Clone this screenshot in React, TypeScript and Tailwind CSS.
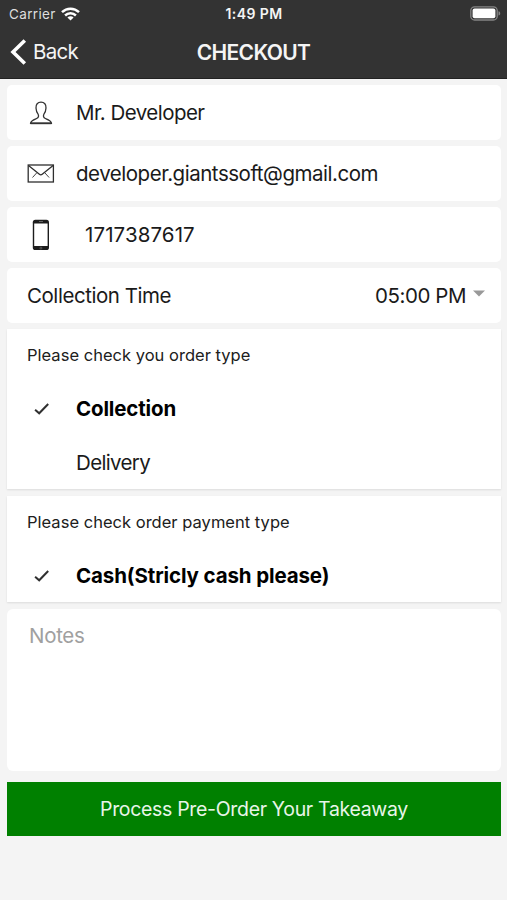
import React from 'react'

interface ContactField {
  id: string
  value: string
  icon: React.ReactNode
  valueClass: string
}

interface ChoiceGroupProps {
  title: string
  options: { label: string; className: string }[]
  className: string
}

const WifiIcon = () => (
  <svg width="19" height="14" viewBox="0 0 19 14" fill="none" stroke="white" strokeWidth="2.5">
    <path d="M1 5.2C5.8 0.6 13.2 0.6 18 5.2" />
    <path d="M4.1 8.5C7.1 5.6 11.9 5.6 14.9 8.5" />
    <path d="M9.5 13.6L6.4 10.5C8.1 8.9 10.9 8.9 12.6 10.5Z" fill="white" stroke="none" />
  </svg>
)

const BatteryIcon = () => (
  <svg width="31" height="15" viewBox="0 0 31 15" fill="none">
    <rect x="0.8" y="0.8" width="26.4" height="13.2" rx="3.8" stroke="#858585" strokeWidth="1.3" />
    <rect x="2.6" y="2.6" width="22.8" height="9.6" rx="2" fill="white" />
    <path d="M28.5 5.2C30.8 5.8 30.8 9 28.5 9.6Z" fill="#858585" />
  </svg>
)

const UserIcon = () => (
  <svg width="24" height="24" viewBox="0 0 24 24" fill="none" stroke="#333333" strokeWidth="1.3" strokeLinejoin="round">
    <path d="M12 1.2C8.6 1.2 6.8 3.5 7 7C7.1 9.5 8 12 9.2 13.4C9.9 15.1 9.6 16.7 7.6 17.5C4.4 18.7 2.1 19.3 1.5 22.4H22.5C21.9 19.3 19.6 18.7 16.4 17.5C14.4 16.7 14.1 15.1 14.8 13.4C16 12 16.9 9.5 17 7C17.2 3.5 15.4 1.2 12 1.2Z" />
    <path d="M1.5 22.3H22.5" strokeWidth="1.8" />
  </svg>
)

const MailIcon = () => (
  <svg width="28" height="19" viewBox="0 0 28 19" fill="none" stroke="#2f2f2f" strokeWidth="1.3">
    <rect x="1.2" y="1" width="25.2" height="17" />
    <path d="M1.5 1.5L12.4 10.3C13.4 11.1 14.2 11.1 15.2 10.3L26.1 1.5" />
    <path d="M5.5 13.5L9.6 9M22.1 13.5L18 9" strokeWidth="0.9" />
  </svg>
)

const PhoneIcon = () => (
  <svg width="18" height="32" viewBox="0 0 18 32">
    <rect x="0.8" y="0.7" width="16.2" height="30.4" rx="2.6" fill="#1c1c1c" />
    <rect x="2.2" y="4.5" width="13.4" height="22.5" fill="white" />
    <path d="M7 2.5H11" stroke="#777777" strokeWidth="0.8" />
    <circle cx="8.9" cy="29.1" r="1" fill="none" stroke="#777777" strokeWidth="0.6" />
  </svg>
)

const CheckIcon = () => (
  <svg width="16" height="14" viewBox="0 0 16 14" fill="none" stroke="#303030" strokeWidth="2" className="mt-[2px]">
    <path d="M1.1 7.7L5.2 11.3L14.2 2" />
  </svg>
)

const contactFields: ContactField[] = [
  { id: 'name', value: 'Mr. Developer', icon: <UserIcon />, valueClass: 'tracking-[-0.54px]' },
  { id: 'email', value: 'developer.giantssoft@gmail.com', icon: <MailIcon />, valueClass: 'tracking-[-0.47px]' },
  { id: 'phone', value: '1717387617', icon: <PhoneIcon />, valueClass: 'pl-[9px] tracking-[0.1px]' },
]

const ChoiceGroup: React.FC<ChoiceGroupProps> = ({ title, options, className }) => {
  const [selected, setSelected] = React.useState(options[0].label)

  return (
    <section className={`bg-white shadow-[0_1px_2px_rgba(0,0,0,0.1)] ${className}`}>
      <h2 className="flex h-[52px] items-center pl-5 text-[16.5px] tracking-[0.02px] text-[#202020]">{title}</h2>
      {options.map(option => {
        const checked = selected === option.label
        return (
          <button
            key={option.label}
            onClick={() => setSelected(option.label)}
            className="flex h-[54px] w-full items-center text-left"
          >
            <span className="flex w-[69px] shrink-0 justify-center">{checked && <CheckIcon />}</span>
            <span className={`pt-[2px] ${option.className} ${checked ? 'font-bold text-black' : ''}`}>{option.label}</span>
          </button>
        )
      })}
    </section>
  )
}

export default function App() {
  return (
    <div className="h-[900px] w-[507px] overflow-hidden bg-[#f4f4f4] font-[Inter,sans-serif] text-[20.5px] text-[#1a1a1a]">
      <header className="h-[79px] border-b border-[#222222] bg-[#333333] text-[#f5f5f5]">
        <div className="grid h-[27px] grid-cols-[1fr_auto_1fr] items-center pr-[6px] pl-[7px] text-[14px]">
          <div className="flex items-center gap-[5px] pl-[2px]">
            <span className="pt-px text-[13.5px] tracking-[0.35px] text-[#dedede]">Carrier</span>
            <WifiIcon />
          </div>
          <span className="text-center font-semibold tracking-[0.4px]">1:49 PM</span>
          <div className="flex justify-end"><BatteryIcon /></div>
        </div>
        <div className="grid h-[50px] grid-cols-3 items-center px-[9px]">
          <button className="flex items-center gap-[6px] tracking-[-0.75px]">
            <svg width="18" height="28" viewBox="0 0 18 28" fill="none" stroke="white" strokeWidth="3.6">
              <path d="M15.8 2.5L4 14L15.8 25.5" />
            </svg>
            <span className="pt-px">Back</span>
          </button>
          <h1 className="pt-[2px] text-center text-[21px] font-semibold tracking-[-0.65px]">CHECKOUT</h1>
        </div>
      </header>

      <main className="flex flex-col pt-[6px] pr-[6px] pl-[7px]">
        <div className="flex flex-col gap-[6px]">
          {contactFields.map(field => (
            <div key={field.id} className="flex h-[55px] items-center rounded-[5px] bg-white">
              <span className="flex w-[69px] shrink-0 justify-center pr-px">{field.icon}</span>
              <span className={`pt-[2px] ${field.valueClass}`}>{field.value}</span>
            </div>
          ))}
          <div className="flex h-[55px] items-center justify-between rounded-[5px] bg-white pr-4 pl-5">
            <span className="pt-[2px] tracking-[-0.45px]">Collection Time</span>
            <button className="flex items-center gap-[7px] tracking-[-0.45px]">
              <span className="pt-[2px]">05:00 PM</span>
              <svg width="12" height="7" viewBox="0 0 12 7" className="mb-[4px]">
                <path d="M0 0.5H12L6 6.5Z" fill="#999999" />
              </svg>
            </button>
          </div>
        </div>

        <ChoiceGroup
          title="Please check you order type"
          options={[
            { label: 'Collection', className: 'tracking-[-0.15px]' },
            { label: 'Delivery', className: 'tracking-[-0.65px]' },
          ]}
          className="mt-[6px] h-[160px]"
        />
        <ChoiceGroup
          title="Please check order payment type"
          options={[{ label: 'Cash(Stricly cash please)', className: 'tracking-[-0.12px]' }]}
          className="mt-[7px] h-[106px]"
        />

        <textarea
          aria-label="Notes"
          placeholder="Notes"
          className="mt-[7px] h-[162px] resize-none rounded-[6px] bg-white px-[22px] pt-[12px] tracking-[-0.3px] outline-none placeholder:text-[#a0a0a0]"
        />
        <button className="mt-[11px] h-[54px] bg-[#008000] pt-[2px] text-[19.5px] tracking-[-0.32px] text-[#e8f5e8]">
          Process Pre-Order Your Takeaway
        </button>
      </main>
    </div>
  )
}
